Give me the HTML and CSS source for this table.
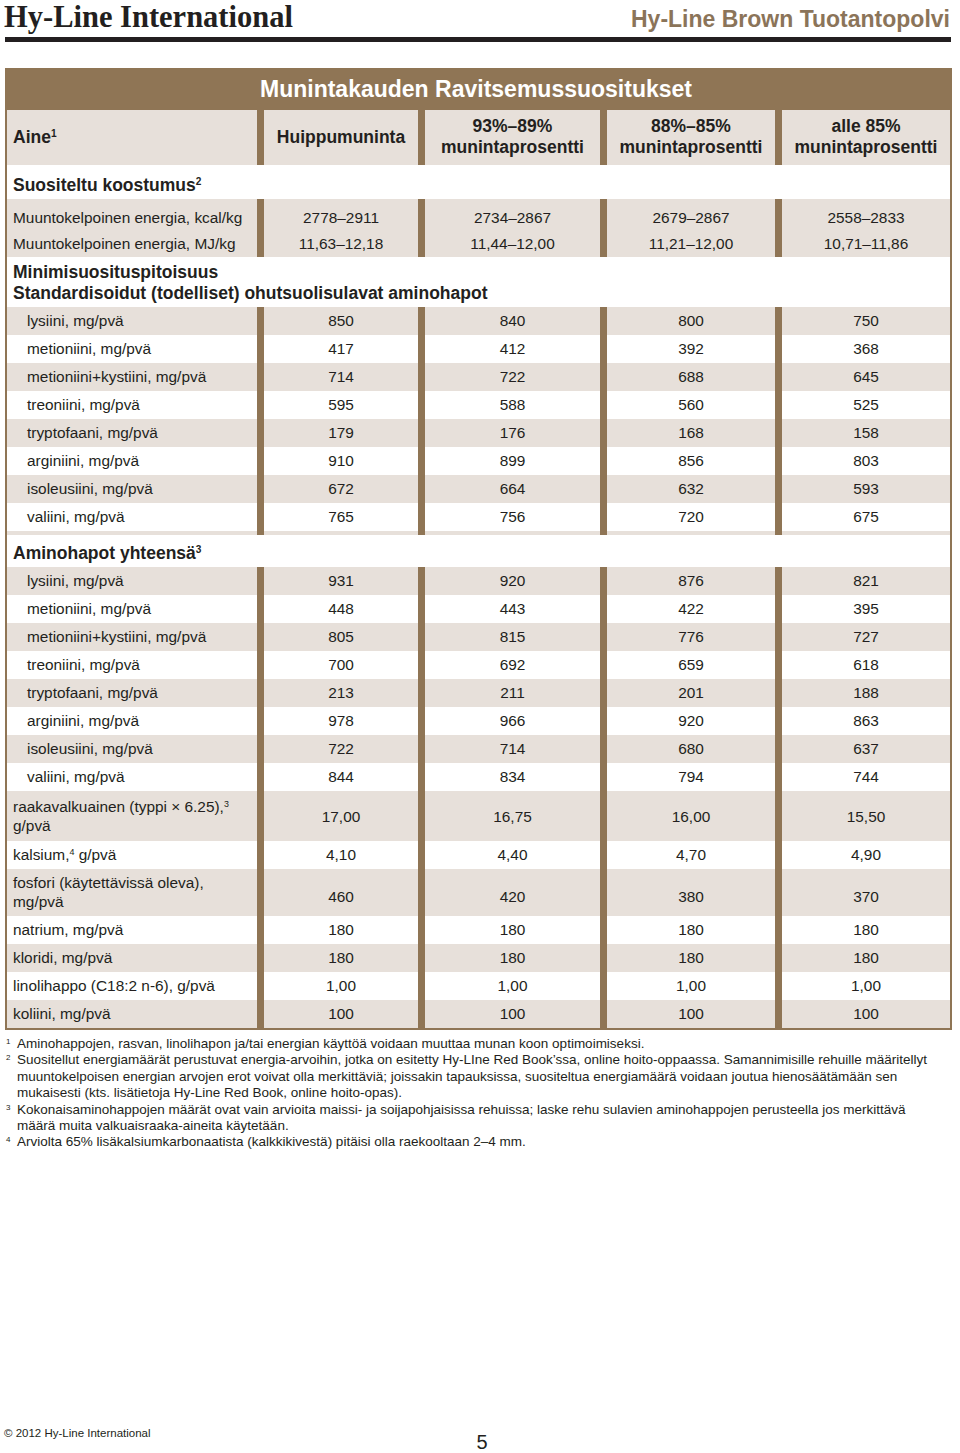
FILE: index.html
```html
<!DOCTYPE html>
<html lang="fi">
<head>
<meta charset="utf-8">
<title>Hy-Line Brown Tuotantopolvi</title>
<link rel="stylesheet" href="styles.css">
</head>
<body>
<div class="page">
  <header class="top">
    <h1 class="brand">Hy-Line International</h1>
    <div class="doc-title">Hy-Line Brown Tuotantopolvi</div>
  </header>
  <div class="rule"></div>

  <table class="nutri">
    <colgroup>
      <col class="c1"><col class="c2"><col class="c3"><col class="c4"><col class="c5">
    </colgroup>
    <thead>
      <tr class="title-row">
        <th class="blank"></th>
        <th colspan="4" class="title">Munintakauden Ravitsemussuositukset</th>
      </tr>
      <tr class="head-row">
        <th class="label">Aine<sup>1</sup></th>
        <th class="v">Huippumuninta</th>
        <th class="v">93%–89%<br>munintaprosentti</th>
        <th class="v">88%–85%<br>munintaprosentti</th>
        <th class="v">alle 85%<br>munintaprosentti</th>
      </tr>
    </thead>
    <tbody>
      <tr class="section s1"><td colspan="5">Suositeltu koostumus<sup>2</sup></td></tr>
    </tbody>
    <tbody class="energy">
      <tr class="e1"><td class="label">Muuntokelpoinen energia, kcal/kg</td><td class="v">2778–2911</td><td class="v">2734–2867</td><td class="v">2679–2867</td><td class="v">2558–2833</td></tr>
      <tr class="e2"><td class="label">Muuntokelpoinen energia, MJ/kg</td><td class="v">11,63–12,18</td><td class="v">11,44–12,00</td><td class="v">11,21–12,00</td><td class="v">10,71–11,86</td></tr>
    </tbody>
    <tbody>
      <tr class="section s2"><td colspan="5">Minimisuosituspitoisuus<br>Standardisoidut (todelliset) ohutsuolisulavat aminohapot</td></tr>
    </tbody>
    <tbody class="striped">
      <tr><td class="label sub">lysiini, mg/pvä</td><td class="v">850</td><td class="v">840</td><td class="v">800</td><td class="v">750</td></tr>
      <tr><td class="label sub">metioniini, mg/pvä</td><td class="v">417</td><td class="v">412</td><td class="v">392</td><td class="v">368</td></tr>
      <tr><td class="label sub">metioniini+kystiini, mg/pvä</td><td class="v">714</td><td class="v">722</td><td class="v">688</td><td class="v">645</td></tr>
      <tr><td class="label sub">treoniini, mg/pvä</td><td class="v">595</td><td class="v">588</td><td class="v">560</td><td class="v">525</td></tr>
      <tr><td class="label sub">tryptofaani, mg/pvä</td><td class="v">179</td><td class="v">176</td><td class="v">168</td><td class="v">158</td></tr>
      <tr><td class="label sub">arginiini, mg/pvä</td><td class="v">910</td><td class="v">899</td><td class="v">856</td><td class="v">803</td></tr>
      <tr><td class="label sub">isoleusiini, mg/pvä</td><td class="v">672</td><td class="v">664</td><td class="v">632</td><td class="v">593</td></tr>
      <tr><td class="label sub">valiini, mg/pvä</td><td class="v">765</td><td class="v">756</td><td class="v">720</td><td class="v">675</td></tr>
      <tr class="spacer"><td></td><td class="v"></td><td class="v"></td><td class="v"></td><td class="v"></td></tr>
    </tbody>
    <tbody>
      <tr class="section s3"><td colspan="5">Aminohapot yhteensä<sup>3</sup></td></tr>
    </tbody>
    <tbody class="striped">
      <tr><td class="label sub">lysiini, mg/pvä</td><td class="v">931</td><td class="v">920</td><td class="v">876</td><td class="v">821</td></tr>
      <tr><td class="label sub">metioniini, mg/pvä</td><td class="v">448</td><td class="v">443</td><td class="v">422</td><td class="v">395</td></tr>
      <tr><td class="label sub">metioniini+kystiini, mg/pvä</td><td class="v">805</td><td class="v">815</td><td class="v">776</td><td class="v">727</td></tr>
      <tr><td class="label sub">treoniini, mg/pvä</td><td class="v">700</td><td class="v">692</td><td class="v">659</td><td class="v">618</td></tr>
      <tr><td class="label sub">tryptofaani, mg/pvä</td><td class="v">213</td><td class="v">211</td><td class="v">201</td><td class="v">188</td></tr>
      <tr><td class="label sub">arginiini, mg/pvä</td><td class="v">978</td><td class="v">966</td><td class="v">920</td><td class="v">863</td></tr>
      <tr><td class="label sub">isoleusiini, mg/pvä</td><td class="v">722</td><td class="v">714</td><td class="v">680</td><td class="v">637</td></tr>
      <tr><td class="label sub">valiini, mg/pvä</td><td class="v">844</td><td class="v">834</td><td class="v">794</td><td class="v">744</td></tr>
      <tr class="tall t50"><td class="label">raakavalkuainen (typpi × 6.25),<sup>3</sup><br>g/pvä</td><td class="v">17,00</td><td class="v">16,75</td><td class="v">16,00</td><td class="v">15,50</td></tr>
      <tr><td class="label">kalsium,<sup>4</sup> g/pvä</td><td class="v">4,10</td><td class="v">4,40</td><td class="v">4,70</td><td class="v">4,90</td></tr>
      <tr class="tall t47"><td class="label">fosfori (käytettävissä oleva),<br>mg/pvä</td><td class="v">460</td><td class="v">420</td><td class="v">380</td><td class="v">370</td></tr>
      <tr><td class="label">natrium, mg/pvä</td><td class="v">180</td><td class="v">180</td><td class="v">180</td><td class="v">180</td></tr>
      <tr><td class="label">kloridi, mg/pvä</td><td class="v">180</td><td class="v">180</td><td class="v">180</td><td class="v">180</td></tr>
      <tr><td class="label">linolihappo (C18:2 n-6), g/pvä</td><td class="v">1,00</td><td class="v">1,00</td><td class="v">1,00</td><td class="v">1,00</td></tr>
      <tr><td class="label">koliini, mg/pvä</td><td class="v">100</td><td class="v">100</td><td class="v">100</td><td class="v">100</td></tr>
    </tbody>
  </table>

  <ol class="notes">
    <li><span class="n">1</span><span class="t">Aminohappojen, rasvan, linolihapon ja/tai energian käyttöä voidaan muuttaa munan koon optimoimiseksi.</span></li>
    <li><span class="n">2</span><span class="t">Suositellut energiamäärät perustuvat energia-arvoihin, jotka on esitetty Hy-LIne Red Book’ssa, online hoito-oppaassa. Samannimisille rehuille määritellyt<br>muuntokelpoisen energian arvojen erot voivat olla merkittäviä; joissakin tapauksissa, suositeltua energiamäärä voidaan joutua hienosäätämään sen<br>mukaisesti (kts. lisätietoja Hy-Line Red Book, online hoito-opas).</span></li>
    <li><span class="n">3</span><span class="t">Kokonaisaminohappojen määrät ovat vain arvioita maissi- ja soijapohjaisissa rehuissa; laske rehu sulavien aminohappojen perusteella jos merkittävä<br>määrä muita valkuaisraaka-aineita käytetään.</span></li>
    <li><span class="n">4</span><span class="t">Arviolta 65% lisäkalsiumkarbonaatista (kalkkikivestä) pitäisi olla raekooltaan 2–4 mm.</span></li>
  </ol>

  <footer class="foot">
    <div class="copy">© 2012 Hy-Line International</div>
    <div class="pageno">5</div>
    <div></div>
  </footer>
</div>
</body>
</html>
```

FILE: styles.css
```css
* { box-sizing: border-box; }
html, body { margin: 0; padding: 0; background: #ffffff; }
body {
  font-family: "Liberation Sans", Arial, Helvetica, sans-serif;
  color: #231f20;
}
.page {
  width: 960px;
  height: 1453px;
  display: flex;
  flex-direction: column;
  overflow: hidden;
}
.top {
  display: flex;
  justify-content: space-between;
  align-items: baseline;
  height: 37px;
  padding: 0 10px 0 4px;
}
.brand {
  margin: 0;
  font-family: "Liberation Serif", "Times New Roman", serif;
  font-weight: bold;
  font-size: 30.5px;
  line-height: normal;
  color: #231f20;
  letter-spacing: 0;
}
.doc-title {
  font-weight: bold;
  font-size: 23px;
  color: #8b7459;
}
.rule {
  height: 5px;
  margin: 0 9px 0 5px;
  background: #231f20;
}

/* table */
.nutri {
  margin: 26px 0 0 5px;
  width: 947px;
  table-layout: fixed;
  border-collapse: separate;
  border-spacing: 0;
  border-left: 2px solid #8f7555;
  border-right: 2px solid #8f7555;
  border-bottom: 2px solid #8f7555;
  font-size: 15.4px;
}
.c1 { width: 250px; }
.c2 { width: 161px; }
.c3 { width: 182px; }
.c4 { width: 175px; }
.c5 { width: 175px; }

.nutri th, .nutri td {
  padding: 0;
  vertical-align: middle;
  font-weight: normal;
}
.nutri .v {
  border-left: 7px solid #8f7555;
  text-align: center;
}
.nutri .label {
  text-align: left;
  padding-left: 6px;
}
.nutri .label.sub { padding-left: 20px; }

sup {
  font-size: 0.58em;
  line-height: 0;
  vertical-align: 0.6em;
}

.title-row th {
  background: #8f7555;
  height: 42px;
  color: #ffffff;
  font-weight: bold;
  font-size: 23px;
  line-height: 42px;
  text-align: left;
}
.title-row .title { padding-left: 3px; }

.head-row th {
  background: #e7e0da;
  font-weight: bold;
  font-size: 17.5px;
  line-height: 21px;
  padding-top: 6px;
  padding-bottom: 7px;
  height: 55px;
}
.head-row th.v { border-left: 7px solid #8f7555; }
.head-row th.label { padding-left: 6px; }

.section td {
  background: #ffffff;
  font-weight: bold;
  font-size: 17.5px;
  padding-left: 6px;
}
.s1 td { padding-top: 6px; line-height: 28px; }
.s2 td { padding-top: 5px; padding-bottom: 3px; line-height: 21px; }
.s3 td { padding-top: 5px; padding-bottom: 1px; line-height: 26px; }

.energy td {
  background: #e7e0da;
  line-height: 26px;
}
.energy .e1 td { padding-top: 6px; }

.striped tr td {
  background: #ffffff;
  line-height: 28px;
}
.striped tr:nth-child(odd) td {
  background: #e7e0da;
}
.striped tr.tall td { line-height: 19px; }
.striped tr.t50 td { padding-top: 6px; padding-bottom: 6px; }
.striped tr.t47 td { padding-top: 4px; padding-bottom: 5px; }
.striped tr.t47 td.v { padding-top: 8px; padding-bottom: 1px; }
.striped tr.spacer td { height: 4px; line-height: 4px; }

/* notes */
.notes {
  list-style: none;
  margin: 6px 0 0 0;
  padding: 0 0 0 6px;
  font-size: 13.5px;
  line-height: 16.4px;
}
.notes li {
  display: flex;
  align-items: flex-start;
}
.notes .n {
  flex: 0 0 11px;
  font-size: 8px;
  line-height: 12px;
}
.notes .t {
  width: 940px;
}

/* footer */
.foot {
  margin-top: auto;
  display: grid;
  grid-template-columns: 1fr auto 1fr;
  align-items: start;
  height: 27px;
  padding-left: 4px;
}
.copy {
  font-size: 11.5px;
  line-height: 14px;
}
.pageno {
  font-size: 20px;
  line-height: 20px;
  padding-top: 6px;
}
```
